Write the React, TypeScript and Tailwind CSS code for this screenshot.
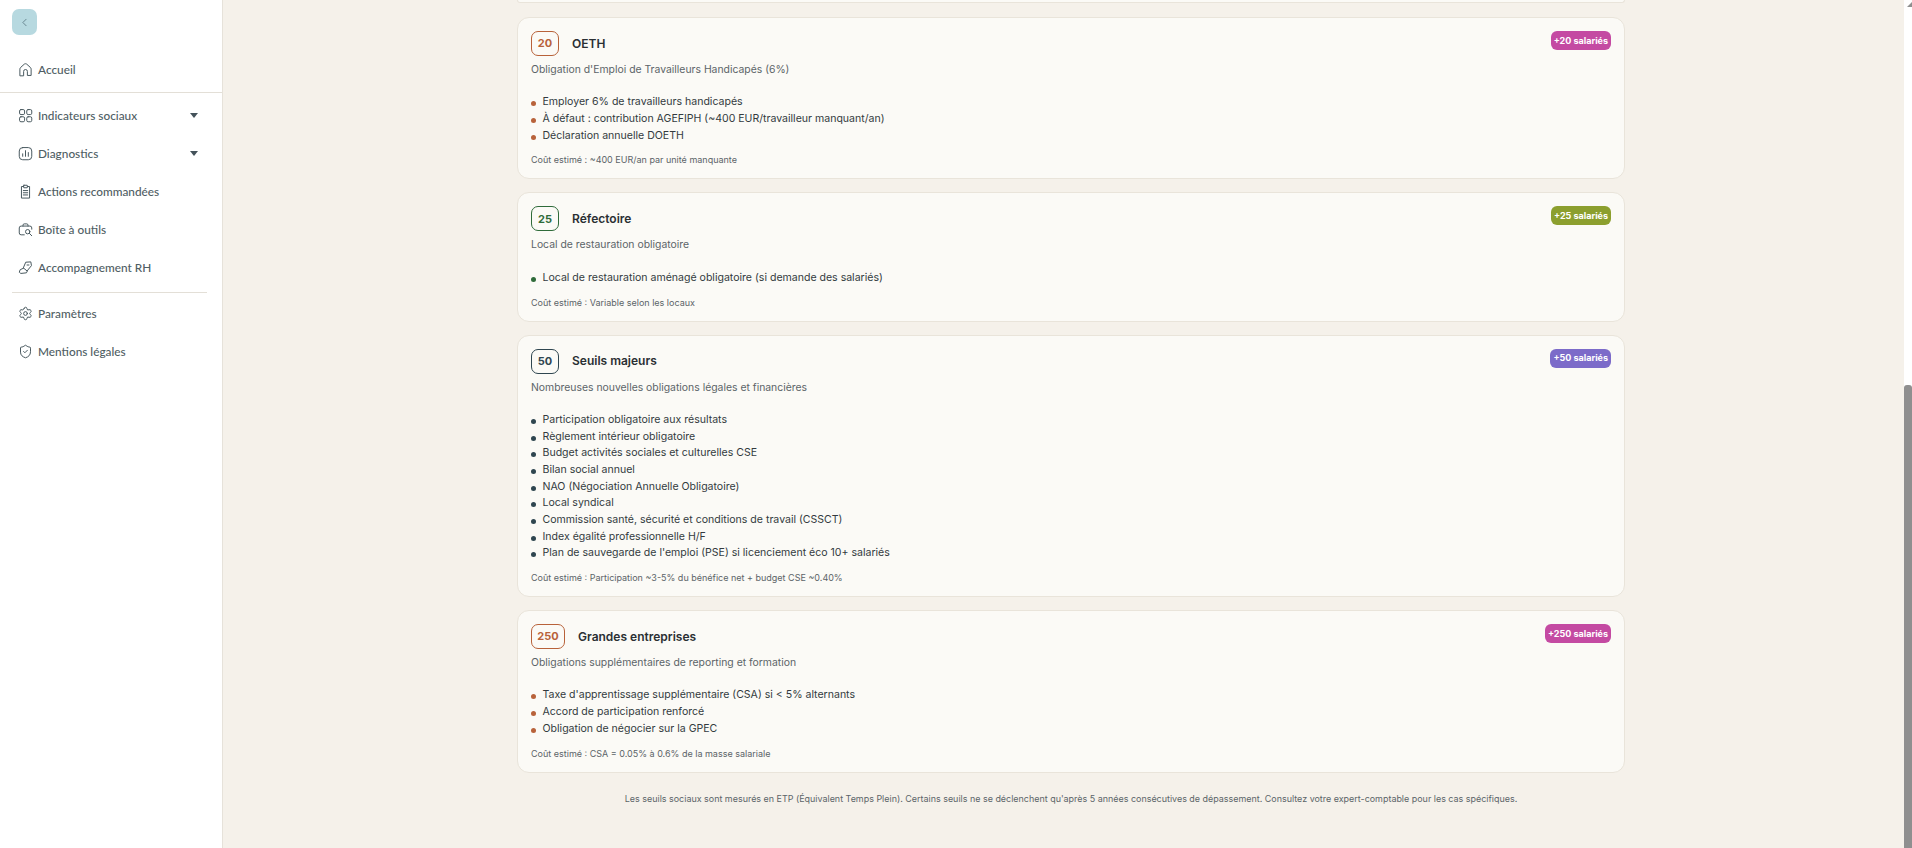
import { ChevronLeft, Settings, ShieldCheck } from "lucide-react";
import type { ReactNode } from "react";

const Caret = () => (
  <svg width="8" height="5" viewBox="0 0 8 5" className="shrink-0"><path d="M0 0h8L4 5z" fill="#44525a" /></svg>
);

function Ico({ children }: { children: ReactNode }) {
  return (
    <svg width="15" height="15" viewBox="0 0 24 24" fill="none" stroke="#4a5a60" strokeWidth="1.6" strokeLinecap="round" strokeLinejoin="round">
      {children}
    </svg>
  );
}

const HomeIcon = () => (
  <Ico><path d="M3 21.5V11.5c0-1.2.5-2.2 1.4-3l5.6-5c1.2-1 2.8-1 4 0l5.6 5c.9.8 1.4 1.8 1.4 3v10h-6v-6.5a3 3 0 0 0-6 0v6.5z" /></Ico>
);
const GridIcon = () => (
  <Ico>
    <rect x="2.5" y="2.5" width="8" height="8" rx="2.2" />
    <rect x="14" y="2.5" width="8" height="8" rx="2.2" />
    <rect x="2.5" y="14" width="8" height="8" rx="2.2" />
    <rect x="14" y="14" width="8" height="8" rx="2.2" />
  </Ico>
);
const ChartIcon = () => (
  <Ico>
    <rect x="2" y="2.5" width="20" height="19.5" rx="5.5" />
    <path d="M7.5 16.5v-4M12 16.5v-9M16.5 16.5v-6" />
  </Ico>
);
const ClipIcon = () => (
  <Ico>
    <path d="M9 4H5.5v18.5h13V4H15" />
    <rect x="9" y="2" width="6" height="4" rx="0.5" />
    <path d="M8.5 10.5h7M8.5 14h7M8.5 17.5h7" />
  </Ico>
);
const ToolIcon = () => (
  <Ico>
    <path d="M10 20.5H5a3 3 0 0 1-3-3V9.5a3 3 0 0 1 3-3h14a3 3 0 0 1 3 3v2" />
    <path d="M8 6.5V5a2 2 0 0 1 2-2h4a2 2 0 0 1 2 2v1.5" />
    <circle cx="15.5" cy="15.5" r="3.5" />
    <path d="M18.2 18.2 22 22" />
  </Ico>
);
const HandIcon = () => (
  <Ico>
    <path d="M13 3.5 20.5 3l1 6-7 8.5-5.5-4.5z" />
    <path d="M14.5 8h3" />
    <path d="M9 13 3.5 15.5 2 19.5l2.5 2 9-1 1.5-3" />
  </Ico>
);

function Nav({ icon, label, caret }: { icon: ReactNode; label: string; caret?: boolean }) {
  return (
    <div className="flex h-[38px] items-center pl-[18px] pr-[24px] font-['Lato',sans-serif] text-[11.8px] font-medium text-[#4f5e64]">
      <span className="flex w-[15px] justify-center">{icon}</span>
      <span className="flex-1 pl-[5px]">{label}</span>
      {caret && <Caret />}
    </div>
  );
}

type CardData = {
  n: string;
  title: string;
  sub: string;
  items: string[];
  cost: string;
  accent: string;
  dot: string;
  badge: string;
  badgeBg: string;
  wide?: boolean;
};

function Card({ d }: { d: CardData }) {
  return (
    <section className="relative rounded-xl border border-[#e9e4da] bg-[#fbfaf6] px-[13px] pt-[13px] pb-[11px]">
      <span className={`absolute right-[13px] top-[13px] flex h-[19px] items-center rounded-md px-[3px] text-[9px] font-bold text-white ${d.badgeBg}`}>{d.badge}</span>
      <div className="flex items-center">
        <span className={`flex h-[25px] items-center justify-center rounded-[7px] border text-[11px] font-bold ${d.accent} ${d.wide ? "w-[34px]" : "w-[28px]"}`}>{d.n}</span>
        <h3 className="ml-[13px] text-[12px] font-semibold text-[#2a2f33]">{d.title}</h3>
      </div>
      <p className="mt-[6px] text-[10.4px] leading-[16px] text-[#5b6468]">{d.sub}</p>
      <ul className="mt-[16px] flex flex-col">
        {d.items.map((t) => (
          <li key={t} className="flex h-[16.67px] items-center text-[10.55px] text-[#333a3e]">
            <span className={`mr-[6.5px] mt-[3px] h-[5px] w-[5px] rounded-full ${d.dot}`} />
            {t}
          </li>
        ))}
      </ul>
      <p className="mt-[9.5px] text-[9px] leading-[14px] text-[#5b6468]">{d.cost}</p>
    </section>
  );
}

const cards: CardData[] = [
  {
    n: "20", title: "OETH", sub: "Obligation d'Emploi de Travailleurs Handicapés (6%)",
    items: ["Employer 6% de travailleurs handicapés", "À défaut : contribution AGEFIPH (~400 EUR/travailleur manquant/an)", "Déclaration annuelle DOETH"],
    cost: "Coût estimé : ~400 EUR/an par unité manquante",
    accent: "border-[#b8623a] text-[#b8623a]", dot: "bg-[#b8623a]", badge: "+20 salariés", badgeBg: "bg-[#c44aa2]",
  },
  {
    n: "25", title: "Réfectoire", sub: "Local de restauration obligatoire",
    items: ["Local de restauration aménagé obligatoire (si demande des salariés)"],
    cost: "Coût estimé : Variable selon les locaux",
    accent: "border-[#2f6b3a] text-[#2f6b3a]", dot: "bg-[#2f6b3a]", badge: "+25 salariés", badgeBg: "bg-[#8c9f2e]",
  },
  {
    n: "50", title: "Seuils majeurs", sub: "Nombreuses nouvelles obligations légales et financières",
    items: ["Participation obligatoire aux résultats", "Règlement intérieur obligatoire", "Budget activités sociales et culturelles CSE", "Bilan social annuel", "NAO (Négociation Annuelle Obligatoire)", "Local syndical", "Commission santé, sécurité et conditions de travail (CSSCT)", "Index égalité professionnelle H/F", "Plan de sauvegarde de l'emploi (PSE) si licenciement éco 10+ salariés"],
    cost: "Coût estimé : Participation ~3-5% du bénéfice net + budget CSE ~0.40%",
    accent: "border-[#2f4650] text-[#2f4650]", dot: "bg-[#2f4650]", badge: "+50 salariés", badgeBg: "bg-[#7c6bc9]",
  },
  {
    n: "250", title: "Grandes entreprises", sub: "Obligations supplémentaires de reporting et formation",
    items: ["Taxe d'apprentissage supplémentaire (CSA) si < 5% alternants", "Accord de participation renforcé", "Obligation de négocier sur la GPEC"],
    cost: "Coût estimé : CSA = 0.05% à 0.6% de la masse salariale",
    accent: "border-[#b8623a] text-[#b8623a]", dot: "bg-[#b8623a]", badge: "+250 salariés", badgeBg: "bg-[#c44aa2]", wide: true,
  },
];

const ic = { size: 15, strokeWidth: 1.6, color: "#4a5a60" };

export default function App() {
  return (
    <div className="flex h-screen overflow-hidden bg-[#f5f1ea] font-['Inter',sans-serif]">
      <aside className="flex w-[223px] shrink-0 flex-col border-r border-[#e6e2da] bg-white">
        <div className="pl-[12px] pt-[9px]">
          <button className="flex h-[26px] w-[25px] items-center justify-center rounded-[7px] bg-[#b7d9e0]">
            <ChevronLeft size={13} strokeWidth={1.25} color="#44626c" />
          </button>
        </div>
        <div className="mt-[15.5px] border-b border-[#e3dfd7] pb-[3px]">
          <Nav icon={<HomeIcon />} label="Accueil" />
        </div>
        <div className="mt-[4px]">
          <Nav icon={<GridIcon />} label="Indicateurs sociaux" caret />
          <Nav icon={<ChartIcon />} label="Diagnostics" caret />
          <Nav icon={<ClipIcon />} label="Actions recommandées" />
          <Nav icon={<ToolIcon />} label="Boîte à outils" />
          <Nav icon={<HandIcon />} label="Accompagnement RH" />
        </div>
        <div className="ml-[12px] mr-[15px] mt-[5px] border-b border-[#e3dfd7]" />
        <div className="mt-[2px]">
          <Nav icon={<Settings {...ic} />} label="Paramètres" />
          <Nav icon={<ShieldCheck {...ic} />} label="Mentions légales" />
        </div>
      </aside>
      <main className="flex-1 overflow-hidden">
        <div className="ml-[294px] w-[1108px]">
          <div className="h-[3px] rounded-b-xl border-x border-b border-[#e9e4da] bg-[#fbfaf6]" />
          <div className="mt-[14px] flex flex-col gap-[13px]">
            {cards.map((c) => <Card key={c.n} d={c} />)}
          </div>
          <p className="mt-[19px] text-center text-[8.95px] leading-[14px] text-[#5b6468]">
            Les seuils sociaux sont mesurés en ETP (Équivalent Temps Plein). Certains seuils ne se déclenchent qu'après 5 années consécutives de dépassement. Consultez votre expert-comptable pour les cas spécifiques.
          </p>
        </div>
      </main>
      <div className="flex w-[8px] shrink-0 flex-col bg-white">
        <svg width="8" height="8" viewBox="0 0 8 8" className="shrink-0"><path d="M3 7 L8 2 V7 Z" fill="#8f8f8f" /></svg>
        <div className="mt-[377px] flex-1 rounded-t-[3px] bg-[#8f8f8f]" />
      </div>
    </div>
  );
}
